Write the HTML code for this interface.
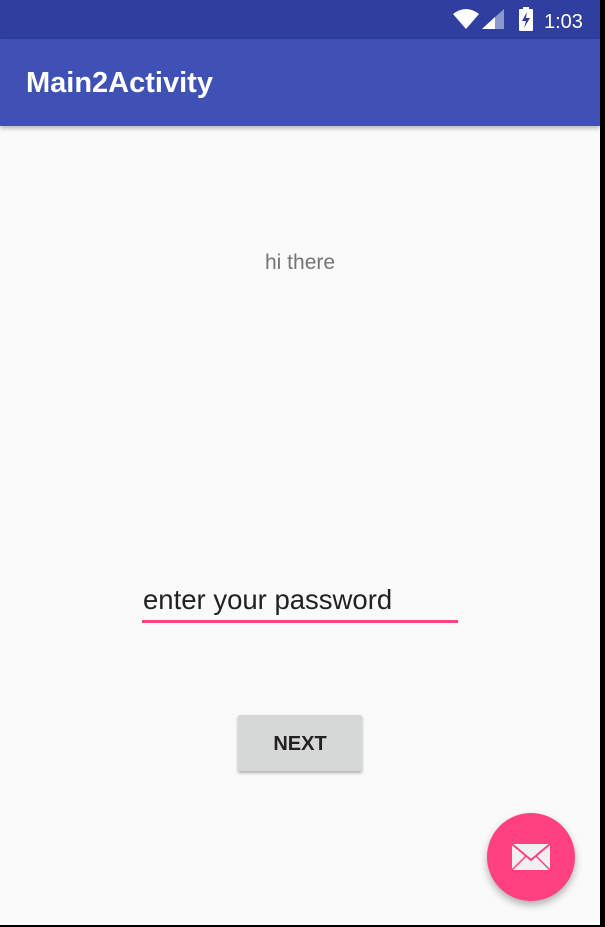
<!DOCTYPE html>
<html><head><style>
body{margin:0;width:605px;height:927px;background:#000;position:relative;overflow:hidden;font-family:"Liberation Sans",Roboto,sans-serif}
#scr{position:absolute;left:0;top:0;width:600px;height:925px;background:#fafafa;overflow:hidden}
#sb{position:absolute;left:0;top:0;width:600px;height:39px;background:#303f9f}
#ab{position:absolute;left:0;top:39px;width:600px;height:87px;background:#3f51b5;box-shadow:0 2px 5px rgba(0,0,0,.3)}
#ab span{position:absolute;left:26px;top:28px;color:#fff;font-size:29px;font-weight:bold}
.t{position:absolute;color:#757575;font-size:21px}
</style></head><body>
<div id="scr">
<div id="sb">
<svg width="600" height="39" style="position:absolute;left:0;top:0">
<path d="M453 14 Q466 4 479 14 L466 29 Z" fill="#fff"/>
<path d="M482 29 L504 29 L504 9 Z" fill="#8c97cc"/>
<path d="M482 29 L495 29 L495 17 Z" fill="#fff"/>
<rect x="519" y="9" width="14" height="22" rx="1" fill="#fff"/>
<rect x="523" y="7" width="6" height="3" fill="#fff"/>
<path d="M527 12 L522 21 L526 21 L524 28 L530 18 L526 18 Z" fill="#303f9f"/>
<text x="544" y="28" fill="#fff" font-size="20" font-family="Liberation Sans">1:03</text>
</svg>
</div>
<div id="ab"><span>Main2Activity</span></div>
<div class="t" style="left:265px;top:251px">hi there</div>
<div style="position:absolute;left:143px;top:584px;font-size:27.5px;color:#212121">enter your password</div>
<div style="position:absolute;left:142px;top:620px;width:316px;height:3px;background:#ff4081"></div>
<div style="position:absolute;left:238px;top:715px;width:124px;height:56px;background:#d6d7d7;border-radius:2px;box-shadow:0 2px 3px rgba(0,0,0,.3);text-align:center;line-height:58px;font-size:20px;font-weight:bold;color:#212121">NEXT</div>
<div style="position:absolute;left:487px;top:813px;width:88px;height:88px;border-radius:50%;background:#ff4081;box-shadow:0 4px 8px rgba(0,0,0,.3)"></div>
<svg width="40" height="28" style="position:absolute;left:511px;top:843px">
<rect x="1" y="1" width="38" height="26" fill="#f0f0f0"/>
<path d="M1 1 L20 17 L39 1" stroke="#ff4081" stroke-width="2" fill="none"/>
<path d="M1 27 L15 13 M39 27 L25 13" stroke="#ff4081" stroke-width="1.5" fill="none"/>
</svg>
</div>
</body></html>
